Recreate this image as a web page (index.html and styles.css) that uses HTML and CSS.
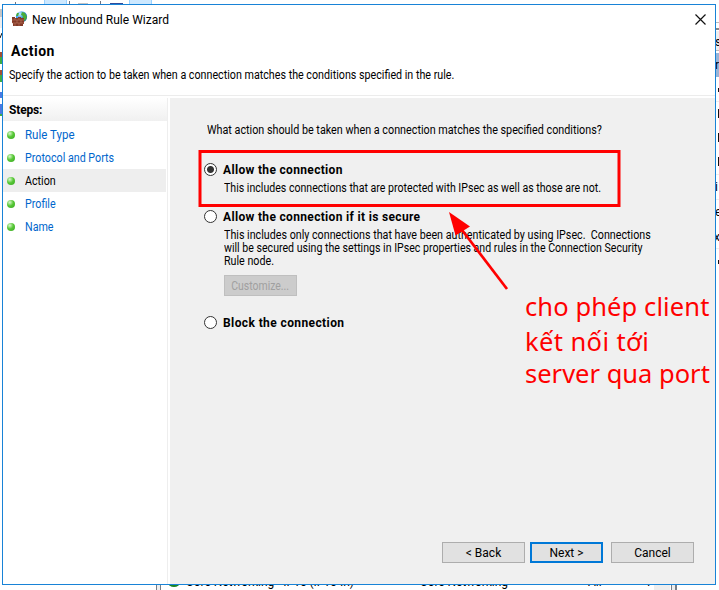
FILE: index.html
```
<!DOCTYPE html>
<html lang="en">
<head>
<meta charset="utf-8">
<title>New Inbound Rule Wizard</title>
<link rel="stylesheet" href="styles.css">
</head>
<body>
<main class="desktop">
  <svg class="backdrop" width="719" height="590" viewBox="0 0 719 590" aria-hidden="true">
    <path fill="#cce8ff" stroke="#99d1ff" d="M44.500-5h22v11h-22zM129.500-5h22v11h-22z"/>
    <path fill="#707580" d="M15 2h1v2h-1zM69 1h1v3h-1zM100 1h1v3h-1z"/>
    <path fill="#c5c5c5" d="M78 3h10v1H78zM0 9h2v8H0z"/>
    <path fill="#2e4c9c" d="M110 3h13v1h-13z"/>
    <path fill="#eee" d="M0 17h2v11H0z"/>
    <path stroke="#111" d="M0 38l2-5"/>
    <path fill="#a14f35" d="M0 52h2v5H0zM0 70h2v5H0z"/>
    <path fill="#3dab45" d="M0 57h2v7H0zM0 75h2v7H0zM0 114h2v2H0z"/>
    <path fill="#4a79e2" d="M0 92h2v6H0zM0 104h2v10H0z"/>
    <path fill="#bbb" d="M716 22h3v1h-3zM716 50h3v1h-3z"/>
    <path fill="#888" d="M716 28h3v2h-3z"/>
    <path fill="#eee" d="M716 31h3v19h-3zM716 101h3v1h-3zM716 174h3v1h-3zM716 199h3v1h-3zM716 248h3v1h-3z"/>
    <path fill="#99b4d7" d="M716 53h3v24h-3z"/>
    <path fill="#111" d="M718 88h1v4h-1zM718 109h1v9h-1zM718 133h1v9h-1zM718 157h1v9h-1zM718 260h1v4h-1z"/>
    <g class="bg-text"><text x="715" y="46">s</text><text x="715" y="69">r</text><text x="715" y="191">i</text><text x="715" y="216">e</text><text x="714" y="241">x</text></g>
    <path fill="#777e88" d="M156 585h1v5h-1zM160 585h1v5h-1zM671 585h1v5h-1zM675 585h2v5h-2z"/>
    <path fill="#eee" d="M157 585h3v5h-3zM654 585h16v5h-16zM672 585h3v5h-3z"/>
    <ellipse cx="174" cy="583" rx="6" ry="4" fill="#188324"/>
    <g class="bg-text"><text x="186" y="586" textLength="168">Core Networking - IPv6 (IPv6-In)</text><text x="420" y="586" textLength="88">Core Networking</text><text x="588" y="586">All</text><text x="645" y="586">Y</text></g>
  </svg>

  <section class="dialog">
    <header class="titlebar">
      <svg class="app-icon" width="16" height="16" viewBox="0 0 16 16">
        <defs><radialGradient id="globe" cx=".35" cy=".25" r=".8"><stop offset="0" stop-color="#c4f1ff"/><stop offset=".5" stop-color="#3795e8"/><stop offset="1" stop-color="#124bad"/></radialGradient></defs>
        <circle cx="9.500" cy="5.800" r="5.600" fill="url(#globe)"/>
        <path fill="#49ad38" d="M10 1l3 1 2 4-2 4-3-2 1-3-2-1zM5 2l2 0-1 3-2 0z"/>
        <path fill="#833a27" d="M0 7V6h3v1h3V6h3v1h3v6h-1v2H1v-3H0z"/>
        <path stroke="#c68169" stroke-width=".5" d="M0 9h12M0 12h12M3 7v2M7 7v2M5 9v3M9 9v3M3 12v3M7 12v3"/>
      </svg>
      <span class="window-title">New Inbound Rule Wizard</span>
      <svg class="close" width="11" height="11" viewBox="0 0 11 11"><path d="M.5.5l10 10M10.500.5l-10 10" stroke="#111" stroke-width="1.200"/></svg>
    </header>
    <div class="heading">
      <h1>Action</h1>
      <p><span class="narrow">Specify the action to be taken when a connection matches the conditions specified in the rule.</span></p>
    </div>
    <div class="body">
      <nav class="sidebar">
        <h2>Steps:</h2>
        <ul>
          <li><i></i><a class="narrow wide">Rule Type</a></li>
          <li><i></i><a class="narrow">Protocol and Ports</a></li>
          <li class="current"><i></i><a class="narrow">Action</a></li>
          <li><i></i><a class="narrow">Profile</a></li>
          <li><i></i><a class="narrow">Name</a></li>
        </ul>
      </nav>
      <div class="content">
        <p class="question"><span class="narrow">What action should be taken when a connection matches the specified conditions?</span></p>
        <div class="option allow">
          <span class="radio checked"></span>
          <div><h3>Allow the connection</h3>
          <p><span class="narrow tight">This includes connections that are protected with IPsec as well as those are not.</span></p></div>
        </div>
        <div class="option secure">
          <span class="radio"></span>
          <div><h3>Allow the connection if it is secure</h3>
          <p><span class="narrow">This includes only connections that have been authenticated by using IPsec.&nbsp; Connections</span><br><span class="narrow tight">will be secured using the settings in IPsec properties and rules in the Connection Security</span><br><span class="narrow">Rule node.</span></p>
          <button class="customize" disabled><span>Customize...</span></button></div>
        </div>
        <div class="option block">
          <span class="radio"></span>
          <div><h3>Block the connection</h3></div>
        </div>
        <footer>
          <button>&lt; Back</button>
          <button class="next">Next &gt;</button>
          <button class="cancel">Cancel</button>
        </footer>
      </div>
    </div>
  </section>

  <svg class="annotation" width="719" height="590" viewBox="0 0 719 590">
    <rect x="200" y="151.500" width="419" height="54" fill="none" stroke="red" stroke-width="3"/>
    <path d="M507 289L462 230" stroke="red" stroke-width="2.700"/>
    <path d="M449 212l21 14.500-14.500 9z" fill="red"/>
  </svg>
  <p class="note" lang="vi"><span class="n1">cho phép client</span><span class="n2">kết nối tới</span><span class="n3">server qua port</span></p>
</main>
</body>
</html>
```
FILE: styles.css
```
* { box-sizing: border-box; }
body { margin: 0; background: #fff; overflow: hidden; }
h1, h2, h3, p, ul { margin: 0; padding: 0; font-weight: normal; }
.desktop { position: relative; width: 719px; height: 590px; overflow: hidden; padding: 4px 0 0 2px; font: 12px/13px Roboto, "Liberation Sans", sans-serif; color: #000; white-space: nowrap; }
.backdrop { position: absolute; left: 0; top: 0; }
.bg-text { font-size: 12px; }
.narrow { display: inline-block; transform: scaleX(.893); transform-origin: 0 50%; }
.wide { transform: scaleX(.96); }
.tight { transform: scaleX(.883); }
.dialog { position: relative; display: flex; flex-direction: column; width: 714px; height: 581px; border: 1px solid #1883d7; background: #fff; }
.titlebar { display: flex; align-items: center; height: 29px; padding: 0 10px 0 9px; }
.app-icon { margin-top: -1px; }
.window-title { margin: 2px 0 0 4px; letter-spacing: .03px; }
.close { margin: -1px -1px 0 auto; }
.heading { height: 62px; padding: 9px 0 0 6px; border-bottom: 1px solid #ececec; }
h1 { font-size: 14px; line-height: 16px; font-weight: 700; padding-left: 2px; letter-spacing: .5px; }
.heading p { margin-top: 10px; }
.body { display: flex; flex: 1; padding-top: 2px; }
.sidebar { flex: 0 0 165px; border-right: 1px solid #eee; }
h2 { height: 23px; padding: 6px 6px 0; font-size: 12px; line-height: 13px; font-weight: 700; letter-spacing: -.15px; background: linear-gradient(#fff, #f0f0f0); }
.sidebar ul { list-style: none; padding-top: 2px; }
.sidebar li { display: flex; align-items: center; height: 23px; padding: 2px 0 0 4px; margin-right: 1px; color: #0066cc; }
.sidebar li.current { background: #eee; color: #000; }
.sidebar i { width: 8px; height: 8px; margin: -1px 10px 0 0; border-radius: 50%; background: radial-gradient(circle at 35% 30%, #d9f7cc, #58c837 45%, #37a522); }
.content { flex: 1; min-width: 0; display: flex; flex-direction: column; margin-left: 2px; padding: 26px 21px 21px 34px; background: #f0f0f0; }
.question { padding-left: 3px; }
.question .narrow { transform: scaleX(.898); }
.option { display: flex; }
.option > div { margin-left: 6px; }
.radio { flex: none; width: 13px; height: 13px; border: 1px solid #333; border-radius: 50%; background: #fff; }
.checked { background: radial-gradient(circle, #333 3px, #fff 4px); }
h3 { height: 14px; padding-top: 1px; font-size: 12px; line-height: 13px; font-weight: 700; letter-spacing: .33px; }
.block h3 { letter-spacing: .4px; }
.option p { margin: 5px 0 0 1px; }
.allow { margin-top: 26px; }
.secure { margin-top: 15px; }
.block { margin-top: 20px; }
button { display: block; width: 83px; height: 21px; padding: 1px 0 0; border: 1px solid #adadad; background: #e1e1e1; color: #000; font: inherit; }
.customize { width: 73px; margin: 7px 0 0 1px; border-color: #bfbfbf; background: #ccc; color: #a0a0a0; }
.customize span { display: inline-block; transform: scaleX(.87); }
footer { display: flex; margin-top: auto; justify-content: flex-end; }
.next { width: 73px; margin-left: 5px; border: 2px solid #0078d7; }
.cancel { margin-left: 8px; }
.annotation { position: absolute; left: 0; top: 0; }
.note { position: absolute; left: 525px; top: 289px; color: red; font: 25.5px/34px "Noto Sans", sans-serif; }
.note span { display: block; }
.n1 { letter-spacing: .1px; }
.n2 { padding-top: 1px; letter-spacing: .4px; }
.n3 { margin-top: -2px; }
```
